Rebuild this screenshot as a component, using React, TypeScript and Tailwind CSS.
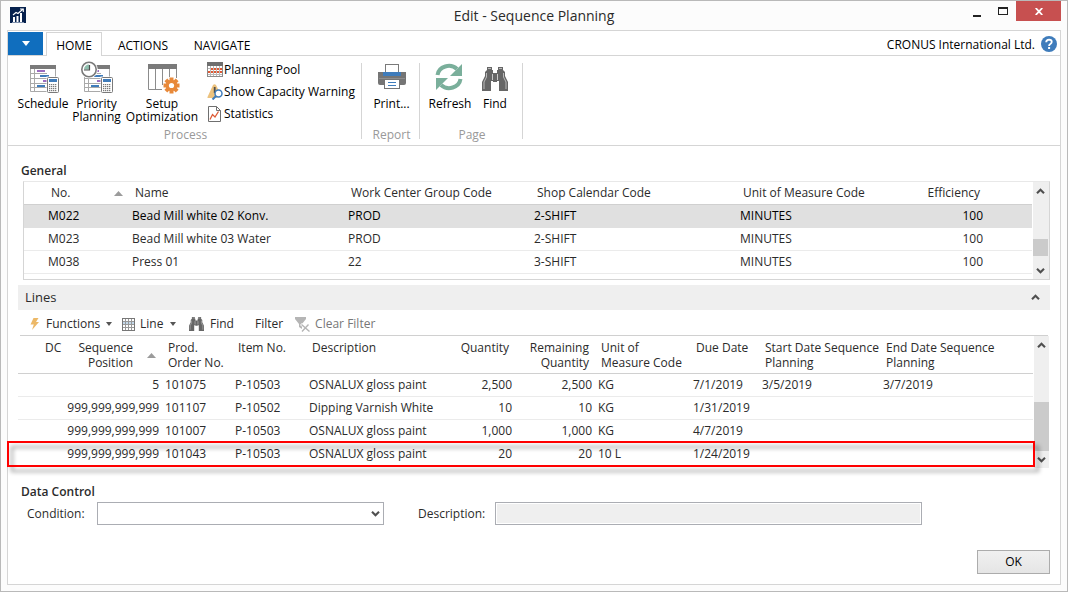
import React from "react";

const Caret = ({ up, className = "" }: { up?: boolean; className?: string }) => (
  <svg width="9" height="7" viewBox="0 0 9 7" className={className} aria-hidden="true">
    <path
      d={up ? "M1 5.2 L4.5 1.7 L8 5.2" : "M1 1.7 L4.5 5.2 L8 1.7"}
      fill="none"
      stroke="#4f4f4f"
      strokeWidth="2.1"
    />
  </svg>
);

const Calculator = ({ x, y }: { x: number; y: number }) => (
  <g transform={`translate(${x} ${y})`}>
    <rect x="-0.5" y="-0.5" width="13" height="17" fill="#fff" />
    <rect x="0.5" y="0.5" width="11" height="15" rx="1" fill="#fff" stroke="#7a7a7a" />
    <rect x="2" y="2" width="8" height="3" fill="#3f7cbb" />
    {[7, 9, 11, 13].map((r) =>
      [2, 4, 6, 8].map((c) => <rect key={`${r}-${c}`} x={c} y={r} width="1.3" height="1.2" fill="#7a7a7a" />),
    )}
  </g>
);

const Sheet = () => (
  <g>
    <path d="M0.5 3V26.5H17M0.5 8.5H17M0.5 13.5H17M0.5 18.5H17M0.5 22.5H17M4.5 3V26" fill="none" stroke="#a9a9a9" />
    <path d="M25.5 4V12" stroke="#a9a9a9" />
    <rect x="0" y="0" width="26" height="4" fill="#7a7a7a" />
    <rect x="7" y="5" width="8" height="2" fill="#9a6bbf" />
    <rect x="10" y="10" width="9" height="2" fill="#3f7cbb" />
    <rect x="13" y="15" width="4" height="2" fill="#9a6bbf" />
    <rect x="7" y="20" width="8" height="2" fill="#3f7cbb" />
  </g>
);

const ScheduleIcon = () => (
  <svg width="32" height="32" viewBox="0 0 32 32" aria-hidden="true">
    <g transform="translate(3 2)">
      <Sheet />
    </g>
    <Calculator x={20} y={14} />
  </svg>
);

const PriorityIcon = () => (
  <svg width="34" height="32" viewBox="0 0 34 32" className="overflow-visible" aria-hidden="true">
    <g transform="translate(4 2)">
      <Sheet />
    </g>
    <circle cx="9" cy="6.5" r="8.8" fill="#fff" />
    <circle cx="9" cy="6.5" r="7.2" fill="#fff" stroke="#7a7a7a" strokeWidth="1.6" />
    <path d="M9 1.5V6.5H4A5 5 0 0 1 9 1.5Z" fill="#8fbfae" />
    <path d="M9.5 2V7H4" fill="none" stroke="#4f4f4f" strokeWidth="1.2" />
    <Calculator x={21} y={14} />
  </svg>
);

const Gear = () => (
  <g transform="translate(23.5 22.5)">
    {[0, 45, 90, 135].map((a) => (
      <rect key={a} x="-2" y="-8" width="4" height="16" fill="#e8893a" transform={`rotate(${a})`} />
    ))}
    <circle r="5.8" fill="#e8893a" />
    <circle r="2.6" fill="#fff" />
  </g>
);

const SetupIcon = () => (
  <svg width="36" height="32" viewBox="-4 0 36 32" aria-hidden="true">
    <path d="M0.5 4V26.5H14M7.5 6V26M14.5 6V22M21.5 6V14M28.5 5V15" fill="none" stroke="#8c8c8c" />
    <rect x="0" y="1" width="29" height="5" fill="#7a7a7a" />
    <Gear />
  </svg>
);

const PrintIcon = () => (
  <svg width="30" height="32" viewBox="0 0 30 32" aria-hidden="true">
    <rect x="8.5" y="1.5" width="13" height="11" fill="#fff" stroke="#7a7a7a" />
    <rect x="6" y="9" width="18" height="4" fill="#3f7cbb" />
    <path d="M1 9H6V13H24V9H29V20Q29 22 27 22H3Q1 22 1 20Z" fill="#757575" />
    <rect x="2" y="15" width="26" height="1" fill="#8e8e8e" />
    <rect x="7.5" y="16.5" width="15" height="9" fill="#fff" stroke="#757575" />
    <path d="M11 19.5H19M11 22.5H19" stroke="#3f7cbb" />
  </svg>
);

const RefreshIcon = () => (
  <svg width="30" height="32" viewBox="1 0 30 32" aria-hidden="true">
    <path d="M3.5 12A11.5 10.5 0 0 1 23 6" fill="none" stroke="#7aaf9b" strokeWidth="4" />
    <path d="M28 1V13H16Z" fill="#7aaf9b" />
    <path d="M26.5 16A11.5 10.5 0 0 1 7 22" fill="none" stroke="#7aaf9b" strokeWidth="4" />
    <path d="M2 27V15H14Z" fill="#7aaf9b" />
  </svg>
);

const Binoculars = ({ width, height }: { width: number; height: number }) => (
  <svg width={width} height={height} viewBox="0 0 26 24" aria-hidden="true">
    <path
      d="M5 0H10V3H11V6H15V3H16V0H21V3L23 5V9L26 15V24H17V14H15V15H11V14H9V24H0V15L3 9V5L5 3Z"
      fill="#666"
    />
    <path d="M6 1.5H9M17 1.5H20M4.5 6V10L2 15V22M21.5 6V10L24 15V22" fill="none" stroke="#c4c4c4" strokeWidth="0.9" />
    <path d="M10.5 7V13M15.5 7V13" stroke="#d5d5d5" strokeWidth="0.9" />
  </svg>
);

const PoolIcon = () => (
  <svg width="16" height="16" viewBox="0 0 16 16" aria-hidden="true">
    <rect x="0.5" y="0.5" width="15" height="14" fill="#fff" stroke="#8c8c8c" />
    <path d="M3.5 4V14M6.5 4V14M9.5 4V14M12.5 4V14M1 6.5H15M1 9.5H15M1 12.5H15" stroke="#b9b9b9" />
    <rect x="0" y="0" width="16" height="4" fill="#6f6f6f" />
    <path d="M4 6H6V8H4ZM7 6H9V8H7ZM10 6H12V8H10ZM13 6H15V8H13ZM1 9H3V11H1ZM4 9H6V11H4ZM7 9H9V11H7ZM10 9H12V11H10ZM13 9H15V11H13Z" fill="#dd5a35" />
  </svg>
);

const WarningIcon = () => (
  <svg width="16" height="16" viewBox="0 0 16 16" aria-hidden="true">
    <path d="M0.5 13L6 1Q7.5 -0.5 9 1L13 9L10 14H1Q0 14 0.5 13Z" fill="#ecc27e" />
    <rect x="6.8" y="3" width="1.8" height="6" fill="#4f4f4f" />
    <circle cx="11.5" cy="9.5" r="3.5" fill="#fff" stroke="#3f7cbb" strokeWidth="1.5" />
    <path d="M9 12L5.5 15.5" stroke="#3f7cbb" strokeWidth="2" />
  </svg>
);

const StatisticsIcon = () => (
  <svg width="16" height="16" viewBox="0 0 16 16" aria-hidden="true">
    <path d="M1.5 0.5H9.5L13.5 4.5V15.5H1.5Z" fill="#fff" stroke="#6f6f6f" />
    <path d="M9.5 0.5V4.5H13.5" fill="none" stroke="#6f6f6f" />
    <path d="M3 13.5L5.5 8.5L8 11L11.5 5.5" fill="none" stroke="#dd5a35" strokeWidth="1.3" />
  </svg>
);

const BigButton = ({ icon, lines, className }: { icon: React.ReactNode; lines: string[]; className: string }) => (
  <button type="button" className={`flex flex-col items-center text-xs leading-[13px] ${className}`}>
    <span className="mb-0.5 flex h-8 items-center justify-center">{icon}</span>
    {lines.map((l) => (
      <span key={l} className="whitespace-nowrap">{l}</span>
    ))}
  </button>
);

const SmallButton = ({ icon, label }: { icon: React.ReactNode; label: string }) => (
  <button type="button" className="flex h-[22px] items-center gap-px whitespace-nowrap text-xs">
    {icon}
    {label}
  </button>
);

const Group = ({ label, className, children }: { label: string; className: string; children: React.ReactNode }) => (
  <section aria-label={label} className={`flex h-[76px] flex-col border-r border-[#d5d5d5] ${className}`}>
    <div className="flex flex-1">{children}</div>
    <div className="pl-0.5 text-center text-xs leading-[9px] text-[#999]">{label}</div>
  </section>
);

const ScrollBar = ({ className, thumb }: { className: string; thumb: string }) => (
  <div className={`flex shrink-0 flex-col items-center bg-[#efefef] ${className}`}>
    <button type="button" aria-label="Scroll up" className="flex h-[18px] items-center justify-center">
      <Caret up />
    </button>
    <div className="flex-1" />
    <div className={`w-full bg-[#cbcbcb] ${thumb}`} />
    <button type="button" aria-label="Scroll down" className="flex h-[17px] items-center justify-center">
      <Caret />
    </button>
  </div>
);

const SortMark = () => (
  <svg width="9" height="5" viewBox="0 0 9 5" aria-hidden="true" className="shrink-0">
    <path d="M4.5 0L9 5H0Z" fill="#9b9b9b" />
  </svg>
);

const DropMark = ({ className = "" }: { className?: string }) => (
  <svg width="6" height="4" viewBox="0 0 6 4" aria-hidden="true" className={className}>
    <path d="M0 0H6L3 4Z" fill="#555" />
  </svg>
);

const centers = [
  ["M022", "Bead Mill white 02 Konv.", "PROD", "2-SHIFT", "MINUTES", "100"],
  ["M023", "Bead Mill white 03 Water", "PROD", "2-SHIFT", "MINUTES", "100"],
  ["M038", "Press 01", "22", "3-SHIFT", "MINUTES", "100"],
];

const orders = [
  ["5", "101075", "P-10503", "OSNALUX gloss paint", "2,500", "2,500", "KG", "7/1/2019", "3/5/2019", "3/7/2019"],
  ["999,999,999,999", "101107", "P-10502", "Dipping Varnish White", "10", "10", "KG", "1/31/2019", "", ""],
  ["999,999,999,999", "101007", "P-10503", "OSNALUX gloss paint", "1,000", "1,000", "KG", "4/7/2019", "", ""],
  ["999,999,999,999", "101043", "P-10503", "OSNALUX gloss paint", "20", "20", "10 L", "1/24/2019", "", ""],
];

const rightAligned = [0, 4, 5];

function GeneralTable() {
  const th = "h-[23px] border-b border-[#d0d0d0] px-1.5 text-left font-normal";
  return (
    <div className="ml-[15px] mr-2.5 flex border border-[#d5d5d5] border-t-[#e8e8e8]">
      <div className="min-w-0 flex-1 pb-[5px] pr-px">
        <table className="w-full table-fixed border-separate border-spacing-0 whitespace-nowrap text-xs leading-4">
          <colgroup>
            <col className="w-[21px]" />
            <col className="w-[84px]" />
            <col className="w-[216px]" />
            <col className="w-[186px]" />
            <col className="w-[206px]" />
            <col className="w-[174px]" />
            <col className="w-[75px]" />
            <col />
          </colgroup>
          <thead>
            <tr>
              <th className={th} />
              <th className={th}>
                <span className="flex items-center justify-between">No. <SortMark /></span>
              </th>
              <th className={th}>Name</th>
              <th className={th}>Work Center Group Code</th>
              <th className={th}>Shop Calendar Code</th>
              <th className={th}>Unit of Measure Code</th>
              <th className="h-[23px] border-b border-[#d0d0d0] px-1.5 text-right font-normal">Efficiency</th>
              <th className={th} />
            </tr>
          </thead>
          <tbody>
            {centers.map((row, i) => {
              const td = `h-[23px] border-b px-[3px] ${i === 0 ? "border-[#e0e0e0] bg-[#e0e0e0] text-black" : "border-[#ebebeb]"}`;
              return (
                <tr key={row[0]}>
                  <td className={td} />
                  {row.map((c, j) => (
                    <td key={j} className={`${td} ${j === 5 ? "text-right" : ""}`}>{c}</td>
                  ))}
                  <td className={td} />
                </tr>
              );
            })}
          </tbody>
        </table>
      </div>
      <ScrollBar className="w-4 pr-px" thumb="mb-1.5 h-[17px]" />
    </div>
  );
}

function LinesTable() {
  const th = "h-[38px] border-b border-[#d0d0d0] px-1.5 pt-1 text-left align-top font-normal leading-[15px]";
  const thRight = "h-[38px] border-b border-[#d0d0d0] px-1.5 pt-1 text-right align-top font-normal leading-[15px]";
  return (
    <div className="relative ml-2.5 mr-[11px] flex">
      <div className="min-w-0 flex-1 pb-0.5 pr-px">
        <table className="w-full table-fixed border-separate border-spacing-0 whitespace-nowrap text-xs leading-4">
          <colgroup>
            <col className="w-[21px]" />
            <col className="w-[24px]" />
            <col className="w-[99px]" />
            <col className="w-[70px]" />
            <col className="w-[74px]" />
            <col className="w-[141px]" />
            <col className="w-[68px]" />
            <col className="w-[80px]" />
            <col className="w-[95px]" />
            <col className="w-[69px]" />
            <col className="w-[121px]" />
            <col />
          </colgroup>
          <thead>
            <tr>
              <th className={th} />
              <th className={th}>DC</th>
              <th className={thRight}>
                <span className="flex items-center justify-end gap-3.5">
                  <span>Sequence<br />Position</span>
                  <SortMark />
                </span>
              </th>
              <th className={th}>Prod.<br />Order No.</th>
              <th className={th}>Item No.</th>
              <th className={th}>Description</th>
              <th className={thRight}>Quantity</th>
              <th className={thRight}>Remaining<br />Quantity</th>
              <th className={th}>Unit of<br />Measure Code</th>
              <th className={th}>Due Date</th>
              <th className={th}>Start Date Sequence<br />Planning</th>
              <th className={th}>End Date Sequence<br />Planning</th>
            </tr>
          </thead>
          <tbody>
            {orders.map((row, i) => {
              const td = `h-[23px] border-b px-[3px] ${i === 3 ? "border-transparent" : "border-[#ebebeb]"}`;
              return (
                <tr key={row[1]}>
                  <td className={td} />
                  <td className={td} />
                  {row.map((c, j) => (
                    <td key={j} className={`${td} ${rightAligned.includes(j) ? "text-right" : ""}`}>{c}</td>
                  ))}
                </tr>
              );
            })}
          </tbody>
        </table>
      </div>
      <ScrollBar className="w-[15px]" thumb="h-[49px]" />
      <div className="pointer-events-none absolute -left-[11px] bottom-px right-[14px] h-[26px] border-2 border-[#ff0000] drop-shadow-[4px_5px_2px_rgba(0,0,0,0.4)]" />
    </div>
  );
}

export default function App() {
  return (
    <div className="flex min-h-screen flex-col border border-[#b9b9b9] bg-[#fcfcfc] px-1.5 pb-1.5 font-['Open_Sans','Noto_Sans',sans-serif] text-xs text-[#2b2b2b]">
      <header className="flex h-[29px] items-start">
        <div className="flex w-[140px] pl-[3px] pt-1.5">
          <svg width="16" height="16" viewBox="0 0 16 16" role="img" aria-label="Dynamics NAV">
            <rect width="16" height="16" fill="#06214d" />
            <path d="M3 10H5V15H3ZM6.5 9H8.5V15H6.5ZM10 6H12V15H10Z" fill="#fff" />
            <path d="M3 8L6 5.5L8 6.5L12.5 2.5M10 2H13.3V5" fill="none" stroke="#fff" strokeWidth="1.1" />
            <path d="M2 15.5H14" stroke="#9fb0c8" strokeWidth="0.8" />
          </svg>
        </div>
        <h1 className="flex-1 pt-[5px] text-center text-sm leading-5">Edit - Sequence Planning</h1>
        <div className="flex w-[140px] justify-end">
          <button type="button" aria-label="Minimize" className="flex h-5 w-[26px] items-center justify-center">
            <svg width="8" height="11" aria-hidden="true"><rect y="9" width="8" height="2" fill="#222" /></svg>
          </button>
          <button type="button" aria-label="Maximize" className="flex h-5 w-[26px] items-center justify-center">
            <svg width="10" height="8" aria-hidden="true"><path d="M0 0H10V8H0ZM1 2V7H9V2Z" fill="#222" fillRule="evenodd" /></svg>
          </button>
          <button type="button" aria-label="Close" className="flex h-5 w-[45px] items-center justify-center bg-[#c75050]">
            <svg width="8" height="7" viewBox="0 0 8 7" aria-hidden="true">
              <path d="M0.7 0L7.3 7M7.3 0L0.7 7" stroke="#fff" strokeWidth="1.8" />
            </svg>
          </button>
        </div>
      </header>

      <main className="flex flex-1 flex-col border border-[#d5d5d5] bg-white">
        <nav className="flex h-[25px] items-end border-b border-[#d5d5d5]">
          <button type="button" aria-label="Application menu" className="flex h-[23px] w-[35px] items-center justify-center self-center bg-[#106ebe]">
            <svg width="8" height="5" aria-hidden="true"><path d="M0 0H8L4 5Z" fill="#fff" /></svg>
          </button>
          <button type="button" className="relative -mb-px ml-[3px] h-6 w-14 border border-b-0 border-[#d5d5d5] bg-white pt-0.5 text-xs text-black">
            HOME
          </button>
          <button type="button" className="h-[22px] w-[82px] pt-[3px] text-xs text-black">ACTIONS</button>
          <button type="button" className="h-[22px] w-[76px] pt-[3px] text-xs text-black">NAVIGATE</button>
          <span className="ml-auto self-center pt-1 text-black">CRONUS International Ltd.</span>
          <button type="button" aria-label="Help" className="ml-1.5 mr-[3px] self-center pt-px">
            <svg width="16" height="16" viewBox="0 0 16 16" aria-hidden="true">
              <circle cx="8" cy="8" r="8" fill="#3f7cbb" />
              <path d="M5.2 6.2Q5.3 3.6 8.1 3.6Q10.8 3.7 10.7 6Q10.6 7.2 9.3 8Q8.1 8.7 8.1 10" fill="none" stroke="#fff" strokeWidth="1.9" />
              <rect x="7.1" y="11" width="2" height="2" fill="#fff" />
            </svg>
          </button>
        </nav>

        <div className="flex border-b border-[#d5d5d5] pb-1.5 pt-[7px] text-black">
          <Group label="Process" className="w-[354px]">
            <BigButton icon={<ScheduleIcon />} lines={["Schedule"]} className="ml-2 w-[54px]" />
            <BigButton icon={<PriorityIcon />} lines={["Priority", "Planning"]} className="w-[53px]" />
            <BigButton icon={<SetupIcon />} lines={["Setup", "Optimization"]} className="w-[78px]" />
            <div className="-mt-1 ml-1.5 flex flex-col">
              <SmallButton icon={<PoolIcon />} label="Planning Pool" />
              <SmallButton icon={<WarningIcon />} label="Show Capacity Warning" />
              <SmallButton icon={<StatisticsIcon />} label="Statistics" />
            </div>
          </Group>
          <Group label="Report" className="w-[58px]">
            <BigButton icon={<PrintIcon />} lines={["Print..."]} className="w-full pl-0.5" />
          </Group>
          <Group label="Page" className="w-[103px]">
            <BigButton icon={<RefreshIcon />} lines={["Refresh"]} className="ml-[3px] w-[54px]" />
            <BigButton icon={<Binoculars width={26} height={24} />} lines={["Find"]} className="w-9" />
          </Group>
        </div>

        <h2 className="ml-[13px] mt-[17px] pb-0.5 text-xs font-semibold leading-4">General</h2>
        <GeneralTable />

        <div className="ml-2.5 mr-2.5 mt-[5px] flex h-[25px] items-center justify-between bg-[#efefef] pl-[7px] pr-2.5">
          <h2 className="text-[13px]">Lines</h2>
          <button type="button" aria-label="Collapse lines"><Caret up /></button>
        </div>
        <div role="toolbar" aria-label="Lines" className="ml-3 mr-3 flex h-[26px] items-center border-b border-[#d0d0d0] pt-[3px] text-xs">
          <button type="button" className="flex w-[102px] items-center pl-2.5">
            <svg width="9" height="12" viewBox="0 0 9 12" aria-hidden="true" className="mr-[7px]">
              <path d="M3.5 0H8.5L6 4H9L2 12L3.8 6.5H0.5Z" fill="#ecb867" />
            </svg>
            Functions
            <DropMark className="ml-auto mr-2.5" />
          </button>
          <button type="button" className="flex w-[67px] items-center">
            <svg width="13" height="13" viewBox="0 0 13 13" aria-hidden="true" className="mr-[5px]">
              <rect x="0.5" y="0.5" width="12" height="12" fill="#fff" stroke="#777" />
              <rect x="1" y="4" width="11" height="3" fill="#c3d8ea" />
              <path d="M3.5 1V12M6.5 1V12M9.5 1V12M1 3.5H12M1 6.5H12M1 9.5H12" stroke="#999" />
            </svg>
            Line
            <DropMark className="ml-auto mr-[13px]" />
          </button>
          <button type="button" className="flex items-center gap-1.5">
            <Binoculars width={15} height={14} />
            Find
          </button>
          <button type="button" className="ml-[21px]">Filter</button>
          <button type="button" className="ml-3 flex items-center gap-[5px] text-[#777]">
            <svg width="15" height="15" viewBox="0 0 15 15" aria-hidden="true">
              <path d="M0 0H11V2L7 7V12L4 10V7L0 2Z" fill="#b5b5b5" />
              <path d="M6 7L14.5 14.5M14 7L6.5 14.5" stroke="#fff" strokeWidth="3" />
              <path d="M6.5 7.5L14.5 14.5M13.5 7.5L7 14.5" stroke="#b5b5b5" strokeWidth="1.4" />
            </svg>
            Clear Filter
          </button>
        </div>
        <LinesTable />

        <h2 className="ml-[13px] mt-4 pb-0.5 text-xs font-semibold leading-4">Data Control</h2>
        <div className="flex items-center pl-[19px] pr-[138px]">
          <label htmlFor="condition" className="w-[70px] shrink-0">Condition:</label>
          <div className="relative flex-[287]">
            <select id="condition" className="block h-[23px] w-full appearance-none border border-[#abadb3] bg-white">
              <option value="" />
            </select>
            <Caret className="pointer-events-none absolute right-1 top-2" />
          </div>
          <label htmlFor="description" className="ml-[34px] w-[77px] shrink-0">Description:</label>
          <div className="flex flex-[427]">
            <input id="description" readOnly className="h-[23px] w-full border border-[#abadb3] bg-[#efefef] shadow-[inset_0_0_0_1px_#ffffff]" />
          </div>
        </div>
        <div className="mt-auto flex justify-end pb-2.5 pr-2.5">
          <button type="button" className="h-6 w-[73px] border border-[#acacac] bg-gradient-to-b from-[#f0f0f0] to-[#e5e5e5] text-xs text-black">
            OK
          </button>
        </div>
      </main>
    </div>
  );
}
